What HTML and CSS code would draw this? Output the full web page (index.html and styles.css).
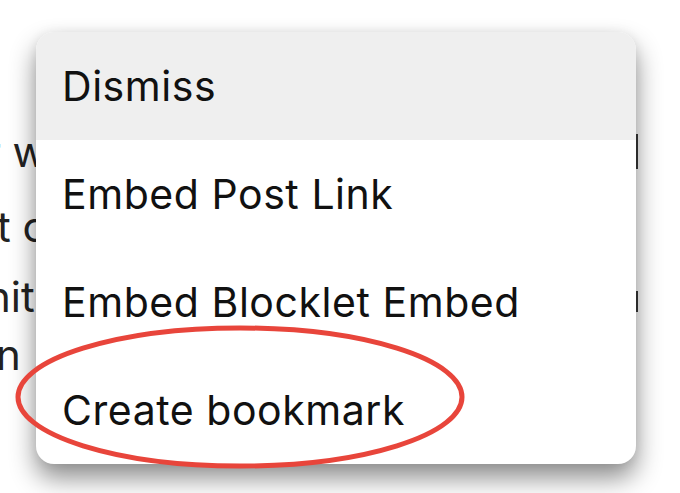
FILE: index.html
```html
<!DOCTYPE html>
<html lang="en">
<head>
<meta charset="utf-8">
<title>Menu</title>
<link rel="stylesheet" href="styles.css">
</head>
<body>
<div class="page">
  <div class="backdrop">
    <div class="line line-1"><span class="frag frag-1">r w</span><span class="edge edge-tall"></span></div>
    <div class="line line-2"><span class="frag frag-2">t c</span></div>
    <div class="line line-3"><span class="frag frag-3">nit</span><span class="edge edge-short"></span></div>
    <div class="line line-4"><span class="frag frag-4">n</span></div>
  </div>

  <div class="menu">
    <div class="item item-active">Dismiss</div>
    <div class="item">Embed Post Link</div>
    <div class="item">Embed Blocklet Embed</div>
    <div class="item">Create bookmark</div>
  </div>

  <svg class="mark" width="680" height="493" viewBox="0 0 680 493" aria-hidden="true">
    <ellipse cx="240" cy="397" rx="222" ry="69" fill="none" stroke="#e8453b" stroke-width="5"/>
  </svg>
</div>
</body>
</html>
```

FILE: styles.css
```css
* { box-sizing: border-box; }

html, body {
  margin: 0;
  padding: 0;
  background: #ffffff;
}

.page {
  position: relative;
  width: 680px;
  height: 493px;
  overflow: hidden;
  background: #ffffff;
  font-family: Inter, "Noto Sans", "Liberation Sans", sans-serif;
}

.backdrop {
  display: flex;
  flex-direction: column;
  padding-top: 120px;
  color: #222222;
  font-size: 42px;
}

.line {
  display: flex;
  align-items: flex-end;
  height: 50px;
  line-height: 50px;
  white-space: nowrap;
  position: relative;
}

.line-1 { height: 57px; }
.line-2 { height: 75px; }
.line-3 { height: 70px; }
.line-4 { height: 58px; }

.frag { display: block; }
.frag-1 { margin-left: -15px; }
.frag-2 { margin-left: -3px; }
.frag-3 { margin-left: -14px; }
.frag-4 { margin-left: -4px; }

.edge {
  display: block;
  width: 2px;
  background: #3a3a3a;
  margin-left: auto;
  margin-right: 42px;
}

.edge-tall { height: 35px; margin-bottom: 8px; }
.edge-short { height: 21px; margin-bottom: 10px; }

.menu {
  position: absolute;
  left: 36px;
  top: 32px;
  width: 600px;
  display: flex;
  flex-direction: column;
  background: #ffffff;
  border-radius: 18px;
  overflow: hidden;
  box-shadow: 0 14px 26px rgba(0, 0, 0, 0.45), 0 0 12px rgba(0, 0, 0, 0.06);
}

.item {
  height: 108px;
  display: flex;
  align-items: center;
  padding-left: 26px;
  font-size: 41px;
  color: #111111;
  letter-spacing: 0.55px;
}

.item-active {
  background: #efefef;
}

.mark {
  position: absolute;
  left: 0;
  top: 0;
  pointer-events: none;
}
```
